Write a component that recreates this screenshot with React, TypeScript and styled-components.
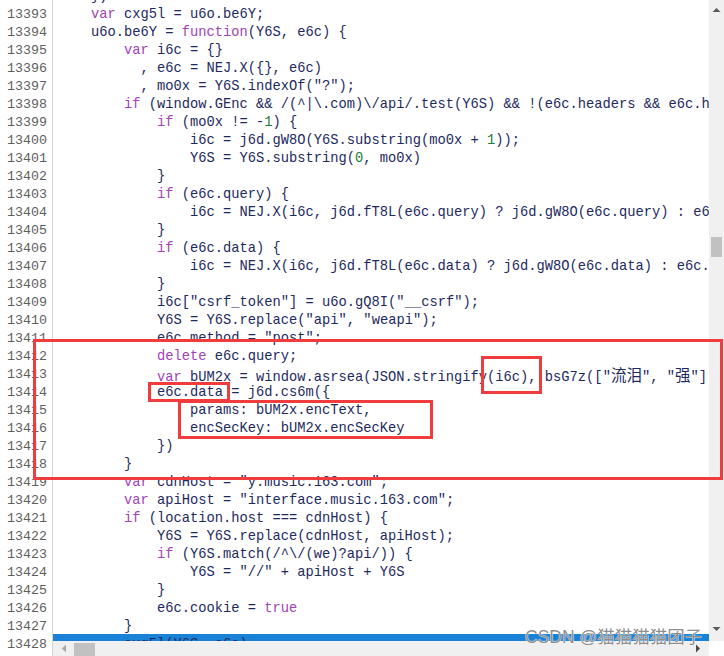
import React from 'react';
import styled, { createGlobalStyle } from 'styled-components';

const FIRST_LINE = 13392;
const ACTIVE_LINE = 13428;

const sourceLines: string[] = [
    '    })',
    '    var cxg5l = u6o.be6Y;',
    '    u6o.be6Y = function(Y6S, e6c) {',
    '        var i6c = {}',
    '          , e6c = NEJ.X({}, e6c)',
    '          , mo0x = Y6S.indexOf("?");',
    '        if (window.GEnc && /(^|\\.com)\\/api/.test(Y6S) && !(e6c.headers && e6c.headers[ef0x.BR3x] == ef0x.Hm5r)) {',
    '            if (mo0x != -1) {',
    '                i6c = j6d.gW8O(Y6S.substring(mo0x + 1));',
    '                Y6S = Y6S.substring(0, mo0x)',
    '            }',
    '            if (e6c.query) {',
    '                i6c = NEJ.X(i6c, j6d.fT8L(e6c.query) ? j6d.gW8O(e6c.query) : e6c.query)',
    '            }',
    '            if (e6c.data) {',
    '                i6c = NEJ.X(i6c, j6d.fT8L(e6c.data) ? j6d.gW8O(e6c.data) : e6c.data)',
    '            }',
    '            i6c["csrf_token"] = u6o.gQ8I("__csrf");',
    '            Y6S = Y6S.replace("api", "weapi");',
    '            e6c.method = "post";',
    '            delete e6c.query;',
    '            var bUM2x = window.asrsea(JSON.stringify(i6c), bsG7z(["流泪", "强"]), bsG7z(Rg2x.md), bsG7z(["爱心", "女孩", "惊恐", "大笑"]));',
    '            e6c.data = j6d.cs6m({',
    '                params: bUM2x.encText,',
    '                encSecKey: bUM2x.encSecKey',
    '            })',
    '        }',
    '        var cdnHost = "y.music.163.com";',
    '        var apiHost = "interface.music.163.com";',
    '        if (location.host === cdnHost) {',
    '            Y6S = Y6S.replace(cdnHost, apiHost);',
    '            if (Y6S.match(/^\\/(we)?api/)) {',
    '                Y6S = "//" + apiHost + Y6S',
    '            }',
    '            e6c.cookie = true',
    '        }',
    '        cxg5l(Y6S, e6c)',
];

// red boxes drawn over the screenshot
const marks = [
    { top: 339, left: 33, width: 690, height: 141 },
    { top: 356, left: 481, width: 61, height: 38 },
    { top: 382, left: 148, width: 82, height: 20 },
    { top: 400, left: 178, width: 255, height: 39 },
];

const TOKEN = /\b(var|function|if|delete|true)\b|[\u4e00-\u9fff]+|"|\b\d+\b/g;

const highlight = (src: string) => {
    const out: React.ReactNode[] = [];
    let last = 0;
    let inString = false;
    for (const m of src.matchAll(TOKEN)) {
        const i = m.index ?? 0;
        if (i > last) out.push(src.slice(last, i));
        const t = m[0];
        if (t === '"') {
            inString = !inString;
            out.push(t);
        } else if (/[\u4e00-\u9fff]/.test(t)) {
            out.push(<Cjk key={i}>{t}</Cjk>);
        } else if (inString) {
            out.push(t);
        } else if (m[1]) {
            out.push(<Keyword key={i}>{t}</Keyword>);
        } else {
            out.push(<NumberLit key={i}>{t}</NumberLit>);
        }
        last = i + t.length;
    }
    if (last < src.length) out.push(src.slice(last));
    return out;
};

const ArrowUp = () => (
    <svg width="9" height="6" viewBox="0 0 9 6">
        <polygon points="0.5,5 4.5,1 8.5,5" fill="#5a5a5a" />
    </svg>
);
const ArrowDown = () => (
    <svg width="9" height="6" viewBox="0 0 9 6">
        <polygon points="0.5,1 4.5,5 8.5,1" fill="#5a5a5a" />
    </svg>
);
const ArrowLeft = () => (
    <svg width="6" height="9" viewBox="0 0 6 9">
        <polygon points="5,0.5 1,4.5 5,8.5" fill="#a6a6a6" />
    </svg>
);
const ArrowRight = () => (
    <svg width="6" height="9" viewBox="0 0 6 9">
        <polygon points="1,0.5 5,4.5 1,8.5" fill="#4a4a4a" />
    </svg>
);

const App = () => {
    return (
        <>
            <GlobalStyle />
            <Editor>
                <Gutter>
                    {sourceLines.map((_, i) => (
                        <LineNo key={i}>{FIRST_LINE + i}</LineNo>
                    ))}
                </Gutter>
                <CodeView>
                    {sourceLines.map((src, i) => (
                        <CodeLine key={i} $active={FIRST_LINE + i === ACTIVE_LINE}>
                            {highlight(src)}
                        </CodeLine>
                    ))}
                </CodeView>
                <VScroll>
                    <ScrollButton $h={20}>
                        <ArrowUp />
                    </ScrollButton>
                    <VTrack>
                        <VThumb $offset={217} />
                    </VTrack>
                    <ScrollButton $h={24}>
                        <ArrowDown />
                    </ScrollButton>
                </VScroll>
                <HScroll>
                    <HButton $w={21}>
                        <ArrowLeft />
                    </HButton>
                    <HTrack>
                        <HThumb $offset={0} />
                    </HTrack>
                    <HButton $w={22}>
                        <ArrowRight />
                    </HButton>
                </HScroll>
                <Corner />
                {marks.map((m, i) => (
                    <Mark
                        key={i}
                        $top={m.top}
                        $left={m.left}
                        $width={m.width}
                        $height={m.height}
                    />
                ))}
                <Watermark>CSDN @猫猫猫猫团子</Watermark>
            </Editor>
        </>
    );
};

const GlobalStyle = createGlobalStyle`
    html, body {
        margin: 0;
        padding: 0;
        background: #ffffff;
    }
    body {
        width: 724px;
        height: 656px;
        overflow: hidden;
    }
`;

const Editor = styled.div`
    position: relative;
    width: 724px;
    height: 656px;
    display: grid;
    grid-template-columns: 53px 656px 15px;
    grid-template-rows: 641px 15px;
    background: #ffffff;
    overflow: hidden;
    font-family: 'Liberation Mono', 'Noto Sans CJK SC', monospace;
`;

const Gutter = styled.div`
    grid-row: 1 / span 2;
    grid-column: 1;
    border-right: 1px solid #d6d6d6;
    overflow: hidden;
    & > div:first-child {
        margin-top: -14px;
    }
`;

const LineNo = styled.div`
    box-sizing: border-box;
    height: 18px;
    padding-top: 2px;
    line-height: 18px;
    font-size: 13.3px;
    color: #5e5e5e;
    text-align: right;
    padding-right: 5px;
`;

const CodeView = styled.div`
    grid-row: 1;
    grid-column: 2;
    overflow: hidden;
    & > div:first-child {
        margin-top: -14px;
    }
`;

const CodeLine = styled.div<{ $active: boolean }>`
    box-sizing: border-box;
    height: 18px;
    padding-top: 2px;
    line-height: 18px;
    font-size: 13.75px;
    white-space: pre;
    padding-left: 5px;
    color: #1e2a5e;
    background: ${(p) => (p.$active ? '#1a82d6' : 'transparent')};
`;

const Keyword = styled.span`
    color: #a043b5;
`;

const NumberLit = styled.span`
    color: #1a7f37;
`;

const Cjk = styled.span`
    font-family: 'Noto Sans CJK SC', sans-serif;
    font-size: 15.5px;
    line-height: 16px;
`;

const VScroll = styled.div`
    grid-row: 1;
    grid-column: 3;
    background: #f0f0f0;
    display: flex;
    flex-direction: column;
`;

const ScrollButton = styled.div<{ $h: number }>`
    height: ${(p) => p.$h}px;
    display: flex;
    align-items: center;
    justify-content: center;
    flex-shrink: 0;
`;

const VTrack = styled.div`
    flex: 1;
    padding-left: 2px;
`;

const VThumb = styled.div<{ $offset: number }>`
    width: 11px;
    height: 20px;
    margin-top: ${(p) => p.$offset}px;
    background: #c1c1c1;
`;

const HScroll = styled.div`
    grid-row: 2;
    grid-column: 2;
    background: #f0f0f0;
    display: flex;
`;

const HButton = styled.div<{ $w: number }>`
    width: ${(p) => p.$w}px;
    display: flex;
    align-items: center;
    justify-content: center;
    flex-shrink: 0;
`;

const HTrack = styled.div`
    flex: 1;
    padding-top: 2px;
`;

const HThumb = styled.div<{ $offset: number }>`
    width: 21px;
    height: 13px;
    margin-left: ${(p) => p.$offset}px;
    background: #c1c1c1;
`;

const Corner = styled.div`
    grid-row: 2;
    grid-column: 3;
    background: #ffffff;
`;

const Mark = styled.div<{ $top: number; $left: number; $width: number; $height: number }>`
    position: absolute;
    top: ${(p) => p.$top}px;
    left: ${(p) => p.$left}px;
    width: ${(p) => p.$width}px;
    height: ${(p) => p.$height}px;
    box-sizing: border-box;
    border: 3px solid #f03c3c;
    pointer-events: none;
`;

const Watermark = styled.div`
    position: absolute;
    left: 525px;
    top: 626px;
    font-family: 'Liberation Sans', 'Noto Sans CJK SC', sans-serif;
    font-size: 17.5px;
    line-height: 22px;
    color: rgba(128, 128, 128, 0.9);
    text-shadow: 0 0 1px #ffffff, 0 0 1px #ffffff;
    white-space: nowrap;
`;

export default App;
